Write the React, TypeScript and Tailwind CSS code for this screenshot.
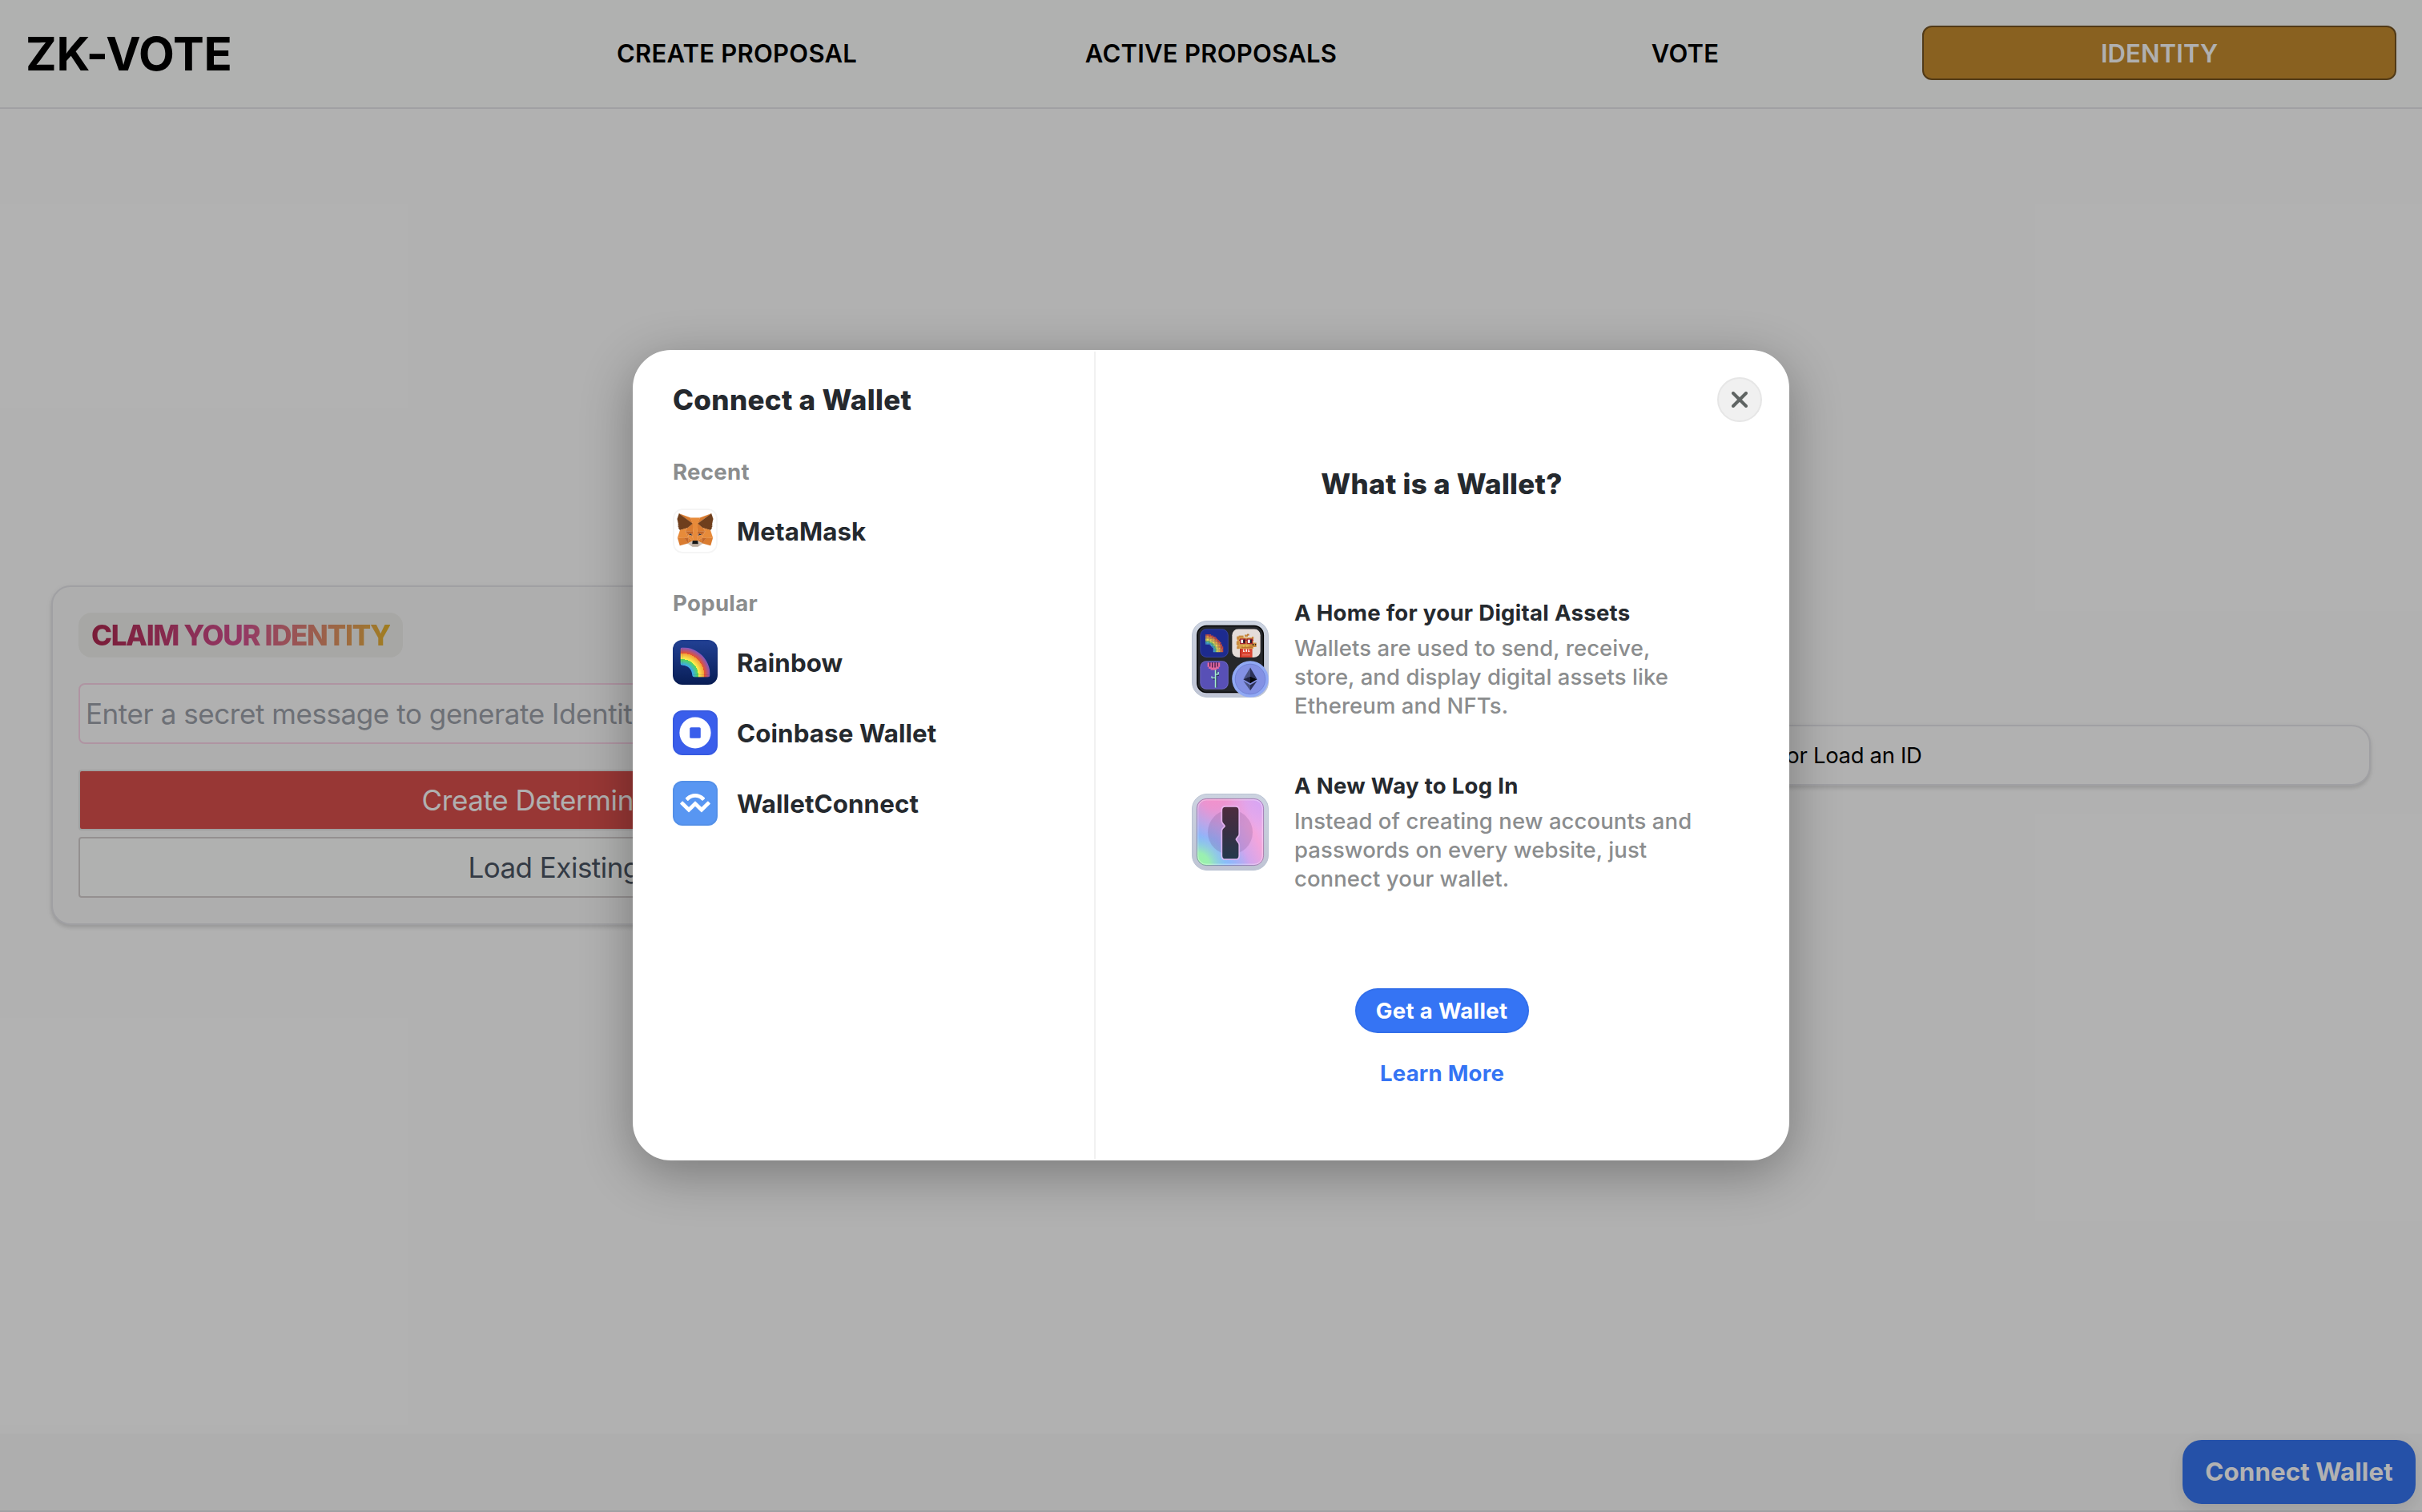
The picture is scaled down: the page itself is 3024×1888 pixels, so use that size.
import type { ReactNode } from "react";

const FOX: [string, string][] = [
  ["#da7c30", "274.1,35.5 174.6,109.4 193,65.8"],
  ["#da7c30", "44.4,35.5 143.1,110.1 125.6,65.8"],
  ["#da7c30", "238.3,206.8 211.8,247.4 268.5,263 284.8,207.7"],
  ["#da7c30", "33.9,207.7 50.1,263 106.8,247.4 80.3,206.8"],
  ["#da7c30", "103.6,138.2 87.8,162.1 144.1,164.6 142.1,104.1"],
  ["#da7c30", "214.9,138.2 175.9,103.4 174.6,164.6 230.8,162.1"],
  ["#da7c30", "106.8,247.4 140.6,230.9 111.4,208.1"],
  ["#da7c30", "177.9,230.9 211.8,247.4 207.1,208.1"],
  ["#d3c2b5", "211.8,247.4 177.9,230.9 180.6,253 180.3,262.3"],
  ["#d3c2b5", "106.8,247.4 138.3,262.3 138.1,253 140.6,230.9"],
  ["#263346", "138.8,193.5 110.6,185.2 130.5,176.1"],
  ["#263346", "179.7,193.5 188,176.1 208,185.2"],
  ["#c2672a", "106.8,247.4 111.6,206.8 80.3,207.7"],
  ["#c2672a", "207,206.8 211.8,247.4 238.3,207.7"],
  ["#c2672a", "230.8,162.1 174.6,164.6 179.8,193.5 188.1,176.1 208.1,185.2"],
  ["#c2672a", "110.6,185.2 130.6,176.1 138.8,193.5 144.1,164.6 87.8,162.1"],
  ["#da7c30", "87.8,162.1 111.4,208.1 110.6,185.2"],
  ["#da7c30", "208.1,185.2 207.1,208.1 230.8,162.1"],
  ["#da7c30", "144.1,164.6 138.8,193.5 145.4,227.6 146.9,182.7"],
  ["#da7c30", "174.6,164.6 171.9,182.6 173.1,227.6 179.8,193.5"],
  ["#e78b3a", "179.8,193.5 173.1,227.6 177.9,230.9 207.1,208.1 208.1,185.2"],
  ["#e78b3a", "110.6,185.2 111.4,208.1 140.6,230.9 145.4,227.6 138.8,193.5"],
  ["#bdaea0", "180.3,262.3 180.6,253 178.1,250.8 140.4,250.8 138.1,253 138.3,262.3 106.8,247.4 117.8,256.4 140.1,271.9 178.4,271.9 200.8,256.4 211.8,247.4"],
  ["#161616", "177.9,230.9 173.1,227.6 145.4,227.6 140.6,230.9 138.1,253 140.4,250.8 178.1,250.8 180.6,253"],
  ["#6f3f1d", "278.3,114.2 286.8,73.4 274.1,35.5 177.9,106.9 214.9,138.2 267.2,153.5 278.8,140 273.8,136.4 281.8,129.1 275.6,124.3 283.6,118.2"],
  ["#6f3f1d", "31.8,73.4 40.3,114.2 34.9,118.2 42.9,124.3 36.8,129.1 44.8,136.4 39.8,140 51.3,153.5 103.6,138.2 140.6,106.9 44.4,35.5"],
  ["#e78b3a", "267.2,153.5 214.9,138.2 230.8,162.1 207.1,208.1 238.3,207.7 284.8,207.7"],
  ["#e78b3a", "103.6,138.2 51.3,153.5 33.9,207.7 80.3,207.7 111.4,208.1 87.8,162.1"],
  ["#e78b3a", "174.6,164.6 177.9,106.9 193.1,65.8 125.6,65.8 140.6,106.9 144.1,164.6 145.3,182.8 145.4,227.6 173.1,227.6 173.3,182.8"],
];

function MetaMaskIcon() {
  return (
    <svg viewBox="0 0 318.6 318.6" className="size-14">
      {FOX.map(([fill, points], i) => (
        <polygon key={i} fill={fill} stroke={fill} strokeWidth="1" strokeLinejoin="round" points={points} />
      ))}
    </svg>
  );
}

function RainbowStops() {
  return (
    <>
      <stop offset="0.351" stopColor="#3aa9f5" />
      <stop offset="0.5676" stopColor="#56d653" />
      <stop offset="0.5676" stopColor="#fdf650" />
      <stop offset="0.7838" stopColor="#f29d38" />
      <stop offset="0.7838" stopColor="#ec5328" />
      <stop offset="1" stopColor="#8157c3" />
    </>
  );
}

function RainbowIcon() {
  return (
    <svg viewBox="0 0 120 120" className="size-14">
      <defs>
        <linearGradient id="rb-sky" x1="0" y1="0" x2="0" y2="1">
          <stop offset="0" stopColor="#224195" />
          <stop offset="1" stopColor="#081d55" />
        </linearGradient>
        <radialGradient id="rb-arc" gradientUnits="userSpaceOnUse" cx="26" cy="94" r="74">
          <RainbowStops />
        </radialGradient>
        <linearGradient id="rb-left" gradientUnits="userSpaceOnUse" x1="0" y1="94" x2="0" y2="20">
          <RainbowStops />
        </linearGradient>
        <linearGradient id="rb-foot" gradientUnits="userSpaceOnUse" x1="26" y1="0" x2="100" y2="0">
          <RainbowStops />
        </linearGradient>
        <clipPath id="rb-clip">
          <path d="M20 62C20 65.3 22.7 68 26 68C40.4 68 52 79.6 52 94C52 97.3 54.7 100 58 100H94C97.3 100 100 97.3 100 94C100 53.1 66.9 20 26 20C22.7 20 20 22.7 20 26V62Z" />
        </clipPath>
      </defs>
      <rect width="120" height="120" fill="url(#rb-sky)" />
      <g clipPath="url(#rb-clip)">
        <rect x="26" y="20" width="74" height="74" fill="url(#rb-arc)" />
        <rect x="20" y="20" width="6.2" height="74" fill="url(#rb-left)" />
        <rect x="26" y="93.8" width="74" height="6.2" fill="url(#rb-foot)" />
      </g>
    </svg>
  );
}

function CoinbaseIcon() {
  return (
    <svg viewBox="0 0 56 56" className="size-14">
      <rect width="56" height="56" fill="#3a5eeb" />
      <circle cx="28" cy="28" r="19.6" fill="#fff" />
      <rect x="21.2" y="21.2" width="13.6" height="13.6" rx="1.6" fill="#3a5eeb" />
    </svg>
  );
}

function WalletConnectIcon() {
  return (
    <svg viewBox="0 0 56 56" className="size-14">
      <rect width="56" height="56" fill="#5896f2" />
      <path
        transform="translate(9.1 16) scale(0.126)"
        fill="#fff"
        d="M61.4 36.3C110.3-11.6 189.7-11.6 238.6 36.3L244.4 42C246.9 44.4 246.9 48.3 244.4 50.7L224.3 70.4C223.1 71.6 221.1 71.6 219.9 70.4L211.8 62.5C177.7 29.1 122.3 29.1 88.2 62.5L79.5 71C78.3 72.2 76.3 72.2 75.1 71L55 51.3C52.5 48.9 52.5 45 55 42.6ZM280.2 77L298.1 94.6C300.6 97 300.6 100.9 298.1 103.2L217.3 182.4C214.9 184.8 210.9 184.8 208.5 182.4L151.1 126.2C150.5 125.6 149.5 125.6 148.9 126.2L91.5 182.4C89.1 184.8 85.1 184.8 82.7 182.4L1.9 103.2C-.6 100.9-.6 97 1.9 94.6L19.8 77C22.2 74.6 26.2 74.6 28.6 77L86 133.2C86.6 133.8 87.6 133.8 88.2 133.2L145.6 77C148 74.6 152 74.6 154.4 77L211.8 133.2C212.4 133.8 213.4 133.8 214 133.2L271.3 77C273.8 74.6 277.8 74.6 280.2 77Z"
      />
    </svg>
  );
}

const ARC_BANDS = ["#4aa7c9", "#6cc56a", "#e9dc55", "#e8b844", "#e08a3c", "#cf4b3c"];

function PixelRainbow() {
  const n = 16;
  const cell = 22 / n;
  const cells: ReactNode[] = [];
  for (let x = 0; x < n; x++) {
    for (let y = 0; y < n; y++) {
      const r = Math.hypot(x + 0.5, n - y - 0.5);
      const band = Math.floor(((r - 7.4) / 8.8) * 6);
      if (band >= 0 && band < 6) {
        cells.push(
          <rect key={`${x}-${y}`} x={17.2 + x * cell} y={17.2 + y * cell} width={cell + 0.05} height={cell + 0.05} fill={ARC_BANDS[band]} />,
        );
      }
    }
  }
  return <g>{cells}</g>;
}

const DOG: [string, number, number, number, number][] = [
  ["#c98a3e", 66, 17.5, 4, 2.5],
  ["#b9742f", 69, 16.6, 2.6, 2],
  ["#c98a3e", 58.6, 18.6, 6, 3],
  ["#d9a24e", 57, 21, 20, 14],
  ["#c98a3e", 56.2, 19.6, 3, 4],
  ["#c98a3e", 55.8, 25.6, 3, 5],
  ["#c98a3e", 56.2, 32.2, 3, 3],
  ["#c98a3e", 75, 20, 2.2, 3],
  ["#c98a3e", 72, 27.6, 8.6, 5.4],
  ["#b9742f", 62, 32.6, 14, 1.6],
  ["#f0c94c", 64, 31, 1.6, 1.4],
  ["#f0c94c", 68, 31, 1.6, 1.4],
  ["#1b1210", 75.8, 29.2, 1.6, 1.6],
  ["#1b1210", 79, 29.2, 1.2, 1.6],
  ["#a3232f", 59, 23.6, 18, 1.5],
  ["#a3232f", 60, 22.4, 7.4, 6.8],
  ["#a3232f", 68.6, 22.4, 7.4, 6.8],
  ["#f3eef4", 61.3, 23.7, 3.2, 4.2],
  ["#191424", 64.2, 23.7, 2, 4.2],
  ["#f3eef4", 69.9, 23.7, 3.2, 4.2],
  ["#191424", 72.8, 23.7, 2, 4.2],
  ["#d94432", 60, 35, 15.6, 11.4],
  ["#b93026", 60, 35, 1.8, 11.4],
  ["#e98273", 63, 42.4, 10, 0.9],
  ["#fff", 64.2, 35.6, 1.1, 3.2],
  ["#fff", 64.2, 37.9, 2, 0.9],
  ["#fff", 67.4, 35.6, 1.6, 3.2],
  ["#fff", 70.4, 35.6, 1.1, 3.2],
  ["#fff", 70.4, 37.9, 2, 0.9],
];

const ROSE: [string, number, number, number, number][] = [
  ["#e0689f", 19.6, 52.4, 15.6, 5.4],
  ["#e0689f", 21, 57.6, 12.8, 2.4],
  ["#e0689f", 23.6, 59.8, 7.6, 1.8],
  ["#4a1c4a", 22, 52, 1.3, 5.4],
  ["#4a1c4a", 25, 52, 1.3, 6.6],
  ["#4a1c4a", 28.4, 52, 1.3, 6.6],
  ["#4a1c4a", 31.6, 52, 1.3, 5.4],
  ["#1c2a3c", 30.2, 61.8, 1.2, 21.4],
  ["#a6efcf", 28.8, 61.6, 1.6, 22],
  ["#a6efcf", 25.4, 71, 3.6, 1.4],
  ["#a6efcf", 24.2, 69.6, 1.6, 1.8],
  ["#a6efcf", 30.2, 66.4, 3, 1.4],
  ["#a6efcf", 32.4, 64, 1.4, 3],
  ["#1c2a3c", 26, 72.4, 2.8, 1],
  ["#1c2a3c", 31.6, 67.8, 2.4, 1],
];

function AssetsIcon() {
  return (
    <svg viewBox="0 0 96 96" className="size-24 shrink-0">
      <defs>
        <linearGradient id="as-case" x1="0" y1="0" x2="0" y2="1">
          <stop offset="0" stopColor="#ccd3e0" />
          <stop offset="1" stopColor="#bfc4d4" />
        </linearGradient>
        <clipPath id="as-dog">
          <rect x="50.2" y="10.3" width="35.6" height="35.6" rx="8" />
        </clipPath>
      </defs>
      <rect x="0.5" y="0.5" width="95" height="95" rx="18.5" fill="url(#as-case)" stroke="#b9c2d2" />
      <rect x="6.8" y="6.5" width="82.6" height="83" rx="11.5" fill="#25272b" stroke="#000" strokeWidth="1.4" />
      <rect x="10.3" y="10.3" width="35.5" height="35.6" rx="8" fill="#1d2b8f" />
      <rect x="10.8" y="10.8" width="34.5" height="34.6" rx="7.5" fill="none" stroke="#fff" strokeOpacity="0.1" />
      <PixelRainbow />
      <g clipPath="url(#as-dog)">
        <rect x="50.2" y="10.3" width="35.6" height="35.6" fill="#e4dcd9" />
        {DOG.map(([fill, x, y, w, h], i) => (
          <rect key={i} fill={fill} x={x} y={y} width={w} height={h} />
        ))}
      </g>
      <rect x="10.3" y="50.2" width="35.5" height="35.6" rx="8" fill="#5850b6" />
      <rect x="10.8" y="50.7" width="34.5" height="34.6" rx="7.5" fill="none" stroke="#fff" strokeOpacity="0.12" />
      {ROSE.map(([fill, x, y, w, h], i) => (
        <rect key={i} fill={fill} x={x} y={y} width={w} height={h} />
      ))}
      <circle cx="73" cy="73" r="22.8" fill="#91a9f4" />
      <circle cx="73" cy="73" r="18.8" fill="#8391e4" stroke="#7182d6" strokeWidth="1" />
      <polygon points="73,58.6 64.4,73.2 73,69.4" fill="#4a5382" />
      <polygon points="73,58.6 81.6,73.2 73,69.4" fill="#2c3158" />
      <polygon points="64.4,73.2 73,69.4 73,78.2" fill="#20233f" />
      <polygon points="81.6,73.2 73,69.4 73,78.2" fill="#05060c" />
      <polygon points="64.4,75.2 73,80.2 73,87.2" fill="#4a5382" />
      <polygon points="81.6,75.2 73,80.2 73,87.2" fill="#2c3158" />
    </svg>
  );
}

function LoginIcon() {
  return (
    <svg viewBox="0 0 96 96" className="size-24 shrink-0">
      <defs>
        <linearGradient id="lg-case" x1="0" y1="0" x2="0" y2="1">
          <stop offset="0" stopColor="#ccd3e0" />
          <stop offset="1" stopColor="#bfc4d4" />
        </linearGradient>
        <linearGradient id="lg-base" x1="0.1" y1="0.8" x2="0.9" y2="0.4">
          <stop offset="0" stopColor="#86b6fb" />
          <stop offset="0.3" stopColor="#9fb0f8" />
          <stop offset="0.6" stopColor="#cfa6ee" />
          <stop offset="0.9" stopColor="#f3a5dc" />
          <stop offset="1" stopColor="#eeaae6" />
        </linearGradient>
        <radialGradient id="lg-pink" cx="0.25" cy="-0.05" r="0.65">
          <stop offset="0" stopColor="#f491ca" />
          <stop offset="0.3" stopColor="#f092cd" stopOpacity="0.9" />
          <stop offset="1" stopColor="#e89ad8" stopOpacity="0" />
        </radialGradient>
        <radialGradient id="lg-violet" cx="1" cy="0" r="0.5">
          <stop offset="0" stopColor="#d3a4f6" />
          <stop offset="1" stopColor="#d3a4f6" stopOpacity="0" />
        </radialGradient>
        <radialGradient id="lg-blue" cx="0.35" cy="1.05" r="0.45">
          <stop offset="0" stopColor="#7fc3fb" />
          <stop offset="1" stopColor="#8fb4fb" stopOpacity="0" />
        </radialGradient>
        <radialGradient id="lg-green" cx="0" cy="1" r="0.48">
          <stop offset="0" stopColor="#98f7a4" />
          <stop offset="0.4" stopColor="#9aefb2" />
          <stop offset="1" stopColor="#8cc8f0" stopOpacity="0" />
        </radialGradient>
        <linearGradient id="lg-key" x1="0" y1="0" x2="0" y2="1">
          <stop offset="0" stopColor="#4d2c3e" />
          <stop offset="0.5" stopColor="#383044" />
          <stop offset="1" stopColor="#24394c" />
        </linearGradient>
      </defs>
      <rect x="0.5" y="0.5" width="95" height="95" rx="18.5" fill="url(#lg-case)" stroke="#b9c2d2" />
      <rect x="6.2" y="6.2" width="83.6" height="83.6" rx="12" fill="url(#lg-base)" />
      <rect x="6.2" y="6.2" width="83.6" height="83.6" rx="12" fill="url(#lg-pink)" />
      <rect x="6.2" y="6.2" width="83.6" height="83.6" rx="12" fill="url(#lg-violet)" />
      <rect x="6.2" y="6.2" width="83.6" height="83.6" rx="12" fill="url(#lg-blue)" />
      <rect x="6.2" y="6.2" width="83.6" height="83.6" rx="12" fill="url(#lg-green)" />
      <rect x="6.4" y="6.4" width="83.2" height="83.2" rx="12" fill="none" stroke="#6b5580" strokeOpacity="0.5" strokeWidth="1" />
      <rect x="7.7" y="7.7" width="80.6" height="80.6" rx="10.6" fill="none" stroke="#fff" strokeOpacity="0.3" strokeWidth="1.4" />
      <circle cx="48" cy="48.2" r="28" fill="#6b4580" fillOpacity="0.2" />
      <path
        d="M42 16.7H54.5Q58.4 16.7 58.4 20.6V50.6Q58.4 52.2 57 53.2L54.9 56Q54.3 57 54.9 58L57 61Q58.4 62.4 58.4 64V77.4Q58.4 81.3 54.5 81.3H42Q38.2 81.3 38.2 77.4V46.4Q38.2 45 39.4 43.8L41.6 41.4Q42.3 40.4 41.6 39.4L39.4 36.8Q38.2 35.6 38.2 34V20.6Q38.2 16.7 42 16.7Z"
        fill="url(#lg-key)"
        stroke="#ecbcf4"
        strokeOpacity="0.75"
        strokeWidth="3.4"
        paintOrder="stroke"
        strokeLinejoin="round"
      />
    </svg>
  );
}

function WalletRow({ icon, name }: { icon: ReactNode; name: string }) {
  return (
    <button type="button" className="flex items-center gap-6 text-left">
      <span className="relative size-14 overflow-hidden rounded-xl">
        {icon}
        <span className="absolute inset-0 rounded-xl border-2 border-black/[0.04]" />
      </span>
      <span className="pt-px text-[31.3px] leading-10 font-bold tracking-[0.003em] text-[#25292e]">{name}</span>
    </button>
  );
}

function Feature({ icon, title, lines }: { icon: ReactNode; title: string; lines: string[] }) {
  return (
    <div className="flex items-center gap-8">
      {icon}
      <div className="flex flex-col gap-2 leading-9 whitespace-nowrap">
        <h3 className="text-[27.6px] font-bold tracking-[0.0097em] text-[#25292e]">{title}</h3>
        <p className="text-[27.5px] font-medium tracking-[0.0025em] text-[#8b8d8e]">
          {lines.map((line) => (
            <span key={line} className="block">
              {line}
            </span>
          ))}
        </p>
      </div>
    </div>
  );
}

function ConnectModal() {
  return (
    <div className="relative flex h-[1012px] w-[1444px] rounded-[48px] border-2 border-white bg-white shadow-[0_16px_64px_rgba(0,0,0,0.32)]">
      <div className="flex w-[576px] flex-col border-r-2 border-[#f1f1f1] pl-12">
        <h1 className="mt-9 text-[35px] leading-12 font-extrabold tracking-[0.0092em] text-[#25292e]">Connect a Wallet</h1>
        <h2 className="mt-12 text-[27.6px] leading-9 font-bold tracking-[0.011em] text-[#8b8d8e]">Recent</h2>
        <div className="mt-7 flex flex-col">
          <WalletRow icon={<MetaMaskIcon />} name="MetaMask" />
        </div>
        <h2 className="mt-11 text-[27.6px] leading-9 font-bold tracking-[0.011em] text-[#8b8d8e]">Popular</h2>
        <div className="mt-7 flex flex-col gap-8">
          <WalletRow icon={<RainbowIcon />} name="Rainbow" />
          <WalletRow icon={<CoinbaseIcon />} name="Coinbase Wallet" />
          <WalletRow icon={<WalletConnectIcon />} name="WalletConnect" />
        </div>
      </div>
      <div className="flex flex-1 flex-col items-center">
        <h2 className="mt-[141px] text-[35px] leading-12 font-extrabold tracking-[0.008em] text-[#25292e]">What is a Wallet?</h2>
        <div className="mt-[119px] flex flex-col gap-16 self-stretch pl-30">
          <Feature
            icon={<AssetsIcon />}
            title="A Home for your Digital Assets"
            lines={["Wallets are used to send, receive,", "store, and display digital assets like", "Ethereum and NFTs."]}
          />
          <Feature
            icon={<LoginIcon />}
            title="A New Way to Log In"
            lines={["Instead of creating new accounts and", "passwords on every website, just", "connect your wallet."]}
          />
        </div>
        <button
          type="button"
          className="mt-[119px] flex h-14 w-[217px] items-center justify-center rounded-full bg-[#3574f4] text-[27.6px] leading-9 font-bold tracking-[0.0115em] text-white shadow-[inset_0_0_0_2px_rgba(0,0,0,0.04)]"
        >
          Get a Wallet
        </button>
        <a className="mt-8 pl-px text-[27.6px] leading-9 font-bold tracking-[0.0075em] text-[#3574f4]">Learn More</a>
      </div>
      <button
        type="button"
        aria-label="Close"
        className="absolute top-8 right-8 flex size-14 items-center justify-center rounded-full border-2 border-[#e6e6e6] bg-[#f0f0f0]"
      >
        <svg viewBox="0 0 20 20" className="size-5" fill="none" stroke="#5f6463" strokeWidth="4" strokeLinecap="round">
          <path d="M2 2L18 18M18 2L2 18" />
        </svg>
      </button>
    </div>
  );
}

export default function App() {
  return (
    <div className="relative flex h-[1888px] w-[3024px] flex-col overflow-hidden bg-[#fefefe] font-[Inter,sans-serif] text-black">
      <header className="h-[136px] border-b-2 border-[#e5e5ea] bg-[#fcfefd] px-8 pt-8">
        <nav className="grid h-[68px] grid-cols-5 items-center text-center text-[31px] leading-10 font-semibold tracking-[0.008em]">
          <span className="pt-px text-left text-[58.2px] leading-[66px] font-bold tracking-[-0.0027em]">ZK-VOTE</span>
          <a className="pt-px">CREATE PROPOSAL</a>
          <a className="pt-px">ACTIVE PROPOSALS</a>
          <a className="pt-px">VOTE</a>
          <a className="flex h-[68px] items-center justify-center rounded-xl border-2 border-[#755322] bg-[#c48c2f] pt-px tracking-[0.0038em] text-[#fdfdfd]">
            IDENTITY
          </a>
        </nav>
      </header>

      <main className="grid h-[1614px] grid-cols-2 content-center items-center gap-30 px-16">
        <section className="flex h-[424px] flex-col rounded-3xl border-2 border-[#e5e5ea] bg-[#fafafa] p-8 shadow-[0_2px_6px_rgba(0,0,0,0.1),0_4px_4px_rgba(0,0,0,0.06)]">
          <div className="flex h-14 w-[405px] items-center rounded-2xl bg-[#f0f0ec] px-4">
            <span className="bg-linear-to-r from-[#ae2850] via-[#d34f90] via-50% to-[#e6b428] bg-clip-text text-[35px] leading-14 font-extrabold tracking-[-0.0387em] whitespace-nowrap text-transparent">
              CLAIM YOUR IDENTITY
            </span>
          </div>
          <input
            className="mt-8 h-[76px] w-full rounded-lg border-2 border-[#fbd5e8] bg-[#fdfdfd] px-[7px] text-[35px] tracking-[-0.0125em] placeholder:text-[#9ca1aa] placeholder:opacity-100"
            placeholder="Enter a secret message to generate Identity"
          />
          <button type="button" className="mt-8 h-[76px] rounded border-2 border-[#e5e5e5] bg-[#da504c] pr-1 text-[35px] tracking-[-0.012em] text-[#fdfdfd]">
            Create Deterministic Identity
          </button>
          <button type="button" className="mt-2 h-[76px] rounded border-2 border-[#d5cece] bg-[#fcfefd] pr-1 text-[35px] tracking-[-0.015em] text-[#4b5563]">
            Load Existing Identity
          </button>
        </section>
        <section className="flex h-[76px] items-center justify-center rounded-3xl border-2 border-[#e5e5ea] bg-[#fefefe] pt-px pl-1.5 text-[27.4px] tracking-[-0.01em] shadow-[0_2px_6px_rgba(0,0,0,0.1),0_4px_4px_rgba(0,0,0,0.06)]">
          Create or Load an ID
        </section>
      </main>

      <footer className="mt-10 flex h-[98px] justify-end border-b-2 border-[#e5e5ea] bg-[#fafafa] p-2">
        <button
          type="button"
          className="flex h-20 w-[291px] items-center justify-center rounded-3xl bg-[#3574f1] pt-px text-[31.3px] font-bold tracking-[0.003em] text-white shadow-[0_8px_24px_rgba(0,0,0,0.1)]"
        >
          Connect Wallet
        </button>
      </footer>

      <div className="absolute inset-0 flex items-center justify-center bg-black/30 pb-0.5">
        <ConnectModal />
      </div>
    </div>
  );
}
